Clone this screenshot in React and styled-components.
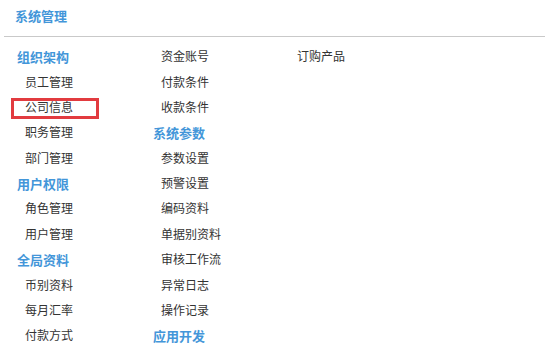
import React from 'react';
import styled, { createGlobalStyle } from 'styled-components';

const GlobalStyle = createGlobalStyle`
  body {
    margin: 0;
    background: #fff;
    font-family: "Liberation Sans", "Noto Sans CJK SC", sans-serif;
  }
`;

const Page = styled.div`
  width: 550px;
  height: 364px;
  background: #fff;
`;

const TitleBar = styled.div`
  height: 36px;
  margin: 0 5px 0 4px;
  padding-left: 11px;
  border-bottom: 1px solid #c9c9c9;
`;

const Title = styled.h1`
  margin: 0;
  font-size: 13px;
  font-weight: bold;
  line-height: 34px;
  color: #4396d9;
`;

const Columns = styled.div`
  display: grid;
  grid-template-columns: repeat(3, 136px);
  padding: 8px 0 0 11px;
`;

const Column = styled.div`
  display: flex;
  flex-direction: column;
`;

const GroupHeader = styled.div`
  height: 25.4px;
  line-height: 25px;
  padding-left: 6px;
  font-size: 13px;
  font-weight: bold;
  color: #4396d9;
`;

const Item = styled.a`
  display: block;
  box-sizing: border-box;
  width: 88px;
  height: 21px;
  margin: 2.2px 0;
  padding-left: 14px;
  line-height: 21px;
  font-size: 12px;
  color: #333;
  text-decoration: none;
  cursor: pointer;
  box-shadow: ${props => (props.selected ? 'inset 0 0 0 3px #e23b3f' : 'none')};
`;

const columns = [
  [
    { header: '组织架构' },
    { label: '员工管理' },
    { label: '公司信息', selected: true },
    { label: '职务管理' },
    { label: '部门管理' },
    { header: '用户权限' },
    { label: '角色管理' },
    { label: '用户管理' },
    { header: '全局资料' },
    { label: '币别资料' },
    { label: '每月汇率' },
    { label: '付款方式' },
  ],
  [
    { label: '资金账号' },
    { label: '付款条件' },
    { label: '收款条件' },
    { header: '系统参数' },
    { label: '参数设置' },
    { label: '预警设置' },
    { label: '编码资料' },
    { label: '单据别资料' },
    { label: '审核工作流' },
    { label: '异常日志' },
    { label: '操作记录' },
    { header: '应用开发' },
  ],
  [{ label: '订购产品' }],
];

export default function App() {
  return (
    <Page>
      <GlobalStyle />
      <TitleBar>
        <Title>系统管理</Title>
      </TitleBar>
      <Columns>
        {columns.map((col, i) => (
          <Column key={i}>
            {col.map((entry, j) =>
              entry.header ? (
                <GroupHeader key={j}>{entry.header}</GroupHeader>
              ) : (
                <Item key={j} selected={entry.selected}>
                  {entry.label}
                </Item>
              )
            )}
          </Column>
        ))}
      </Columns>
    </Page>
  );
}
